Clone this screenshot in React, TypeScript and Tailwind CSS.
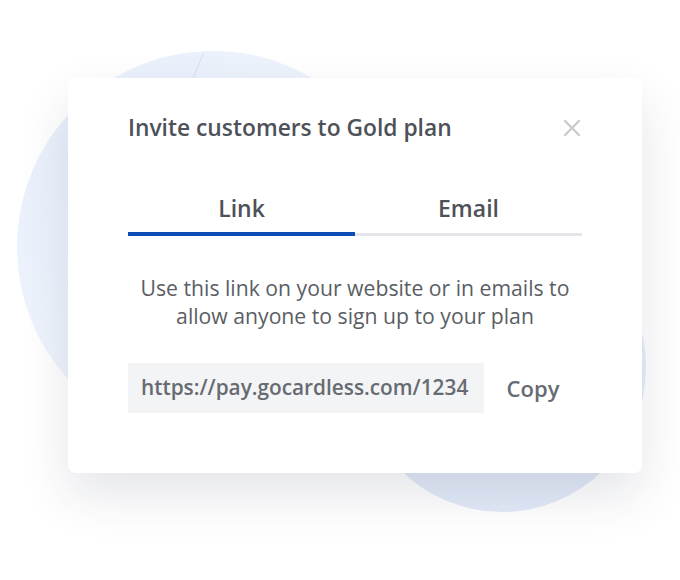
import React from 'react';

const font = { fontFamily: '"Open Sans", Lato, sans-serif' };

export default function App() {
  return (
    <div className="relative w-[680px] h-[580px] overflow-hidden bg-white" style={font}>
      {/* background blobs */}
      <div className="absolute left-[17px] top-[51px] w-[392px] h-[392px] rounded-full bg-gradient-to-br from-[#e8effb] via-[#eff4fc] to-[#e2eaf8]" />
      <div className="absolute left-[358px] top-[222px] w-[288px] h-[290px] rounded-full bg-gradient-to-b from-[#edf2fb] to-[#e2eaf8]" />
      <div className="absolute left-[188px] top-[50px] w-[1px] h-[80px] rotate-[22deg] bg-[#d2def3]" />

      <div className="relative ml-[68px] mt-[78px] w-[574px] h-[395px] rounded-lg bg-white px-[60px] pt-[36px] shadow-[0_22px_50px_rgba(30,40,70,0.12)]">
        <div className="flex items-center justify-between h-[28px]">
          <h1 className="text-[22.8px] font-semibold text-[#4e5158]">
            Invite customers to Gold plan
          </h1>
          <svg width="18" height="18" viewBox="0 0 18 18" className="mr-[1px]">
            <path d="M2 2 L16 16 M16 2 L2 16" stroke="#c9cacd" strokeWidth="2.2" strokeLinecap="round" />
          </svg>
        </div>

        <div className="mt-[51px] grid grid-cols-2">
          <div className="flex flex-col items-center">
            <span className="h-[30px] leading-[30px] text-[23px] font-semibold text-[#4e5158]">Link</span>
            <div className="mt-[9px] w-full h-[4px] bg-[#0b4db3]" />
          </div>
          <div className="flex flex-col items-center">
            <span className="h-[30px] leading-[30px] text-[23px] font-semibold text-[#4e5158]">Email</span>
            <div className="mt-[10px] w-full h-[3px] bg-[#e4e5e8]" />
          </div>
        </div>

        <p className="mt-[38px] text-center text-[21.2px] leading-[28px] text-[#5a5e64]">
          Use this link on your website or in emails to
          <br />
          allow anyone to sign up to your plan
        </p>

        <div className="mt-[33px] flex items-center">
          <div className="w-[356px] h-[50px] flex items-center pl-[13px] bg-[#f3f4f6] text-[20.8px] font-semibold text-[#676b71]">
            https://pay.gocardless.com/1234
          </div>
          <button className="flex-1 h-[50px] text-[22px] font-semibold text-[#676b71] text-center">
            Copy
          </button>
        </div>
      </div>
    </div>
  );
}
